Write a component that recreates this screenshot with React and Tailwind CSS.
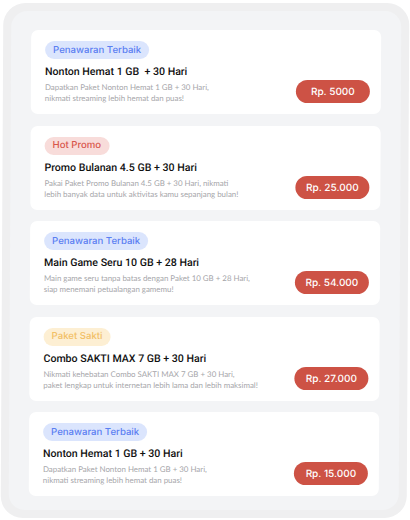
import React from "react";

const cards = [
  {
    badge: "Penawaran Terbaik",
    tone: "blue",
    title: "Nonton Hemat 1 GB\u00a0 + 30 Hari",
    desc: ["Dapatkan Paket Nonton Hemat 1 GB + 30 Hari,", "nikmati streaming lebih hemat dan puas!"],
    price: "Rp. 5000",
  },
  {
    badge: "Hot Promo",
    tone: "red",
    title: "Promo Bulanan 4.5 GB + 30 Hari",
    desc: ["Pakai Paket Promo Bulanan 4.5 GB + 30 Hari, nikmati", "lebih banyak data untuk aktivitas kamu sepanjang bulan!"],
    price: "Rp. 25.000",
  },
  {
    badge: "Penawaran Terbaik",
    tone: "blue",
    title: "Main Game Seru 10 GB + 28 Hari",
    desc: ["Main game seru tanpa batas dengan Paket 10 GB + 28 Hari,", "siap menemani petualangan gamemu!"],
    price: "Rp. 54.000",
  },
  {
    badge: "Paket Sakti",
    tone: "yellow",
    title: "Combo SAKTI MAX 7 GB + 30 Hari",
    desc: ["Nikmati kehebatan Combo SAKTI MAX 7 GB + 30 Hari,", "paket lengkap untuk internetan lebih lama dan lebih maksimal!"],
    price: "Rp. 27.000",
  },
  {
    badge: "Penawaran Terbaik",
    tone: "blue",
    title: "Nonton Hemat 1 GB + 30 Hari",
    desc: ["Dapatkan Paket Nonton Hemat 1 GB + 30 Hari,", "nikmati streaming lebih hemat dan puas!"],
    price: "Rp. 15.000",
  },
];

const toneClass = {
  blue: "bg-[#dbe5fd] text-[#5b7ff2]",
  red: "bg-[#f8dcda] text-[#d8564b]",
  yellow: "bg-[#fdefd3] text-[#f2c066]",
};

function Card({ c }) {
  return (
    <div className="h-[84px] bg-white rounded-[7px] pl-[14px] pr-[11px] pt-[11px] flex items-start justify-between">
      <div className="flex flex-col items-start">
        <span
          className={`h-[18px] px-[8px] rounded-full flex items-center text-[9.6px] font-medium ${toneClass[c.tone]}`}
          style={{ fontFamily: "Inter, sans-serif" }}
        >
          {c.badge}
        </span>
        <div
          className="mt-[6px] text-[10.6px] leading-[14px] font-medium text-[#111111] whitespace-pre"
          style={{ fontFamily: "Roboto, sans-serif" }}
        >
          {c.title}
        </div>
        <div
          className="mt-[3px] text-[7.9px] leading-[11px] text-[#a6a6aa]"
          style={{ fontFamily: "Lato, sans-serif" }}
        >
          <div>{c.desc[0]}</div>
          <div>{c.desc[1]}</div>
        </div>
      </div>
      <div
        className="mt-[39px] w-[74px] h-[23px] rounded-full bg-[#cd5245] text-white text-[10px] font-medium flex items-center justify-center"
        style={{ fontFamily: "Inter, sans-serif" }}
      >
        {c.price}
      </div>
    </div>
  );
}

export default function App() {
  return (
    <div className="w-[410px] h-[520px] bg-white overflow-hidden">
      <div className="ml-[2px] mt-[3px] w-[406px] h-[515px] rounded-[22px] bg-[#efeff0] p-[8px] skew-x-[-0.3deg]">
        <div className="h-full rounded-[16px] bg-[#f3f4f6] pl-[20px] pr-[20px] pt-[19px] flex flex-col gap-[11.5px]">
          {cards.map((c, i) => (
            <Card key={i} c={c} />
          ))}
        </div>
      </div>
    </div>
  );
}
